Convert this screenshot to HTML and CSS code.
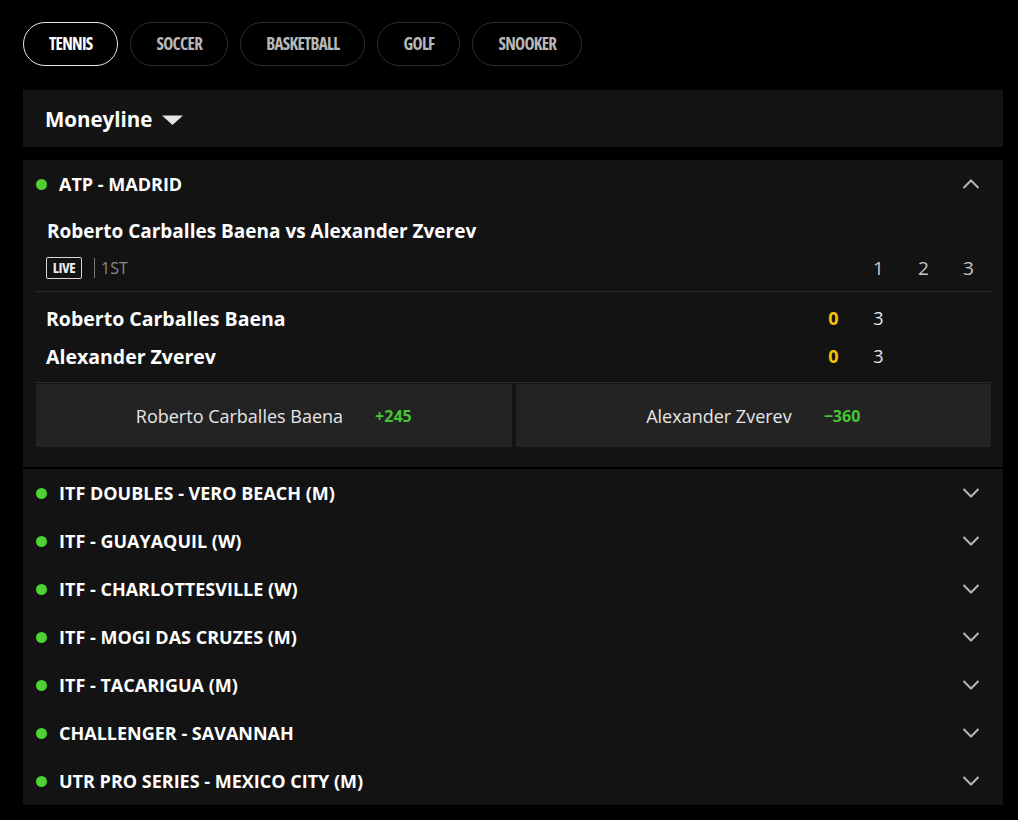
FILE: index.html
```html
<!DOCTYPE html>
<html>
<head>
<meta charset="utf-8">
<link rel="stylesheet" href="styles.css">
</head>
<body>
<div class="page">
  <nav class="tabs">
    <span class="tab active">TENNIS</span>
    <span class="tab">SOCCER</span>
    <span class="tab">BASKETBALL</span>
    <span class="tab">GOLF</span>
    <span class="tab">SNOOKER</span>
  </nav>

  <div class="market">
    <span class="market-title">Moneyline</span>
    <svg class="caret" width="21" height="10" viewBox="0 0 21 10"><path d="M0 0.5 L21 0.5 L10.5 10 Z" fill="#e6e6e6"/></svg>
  </div>

  <div class="card">
    <section class="league open">
      <div class="league-head">
        <span class="dot"></span>
        <span class="league-name">ATP - MADRID</span>
        <svg class="chev" width="18" height="10" viewBox="0 0 18 10"><path d="M1.5 9 L9 1.5 L16.5 9" fill="none" stroke="#b5b5b5" stroke-width="2"/></svg>
      </div>
      <div class="match">
        <div class="match-title">Roberto Carballes Baena vs Alexander Zverev</div>
        <div class="status-row">
          <span class="live">LIVE</span>
          <span class="period">1ST</span>
          <span class="spacer"></span>
          <span class="col"></span>
          <span class="col head">1</span>
          <span class="col head">2</span>
          <span class="col head">3</span>
        </div>
        <div class="players">
          <div class="player-row">
            <span class="player">Roberto Carballes Baena</span>
            <span class="col pts">0</span>
            <span class="col set">3</span>
            <span class="col"></span>
            <span class="col"></span>
          </div>
          <div class="player-row">
            <span class="player">Alexander Zverev</span>
            <span class="col pts">0</span>
            <span class="col set">3</span>
            <span class="col"></span>
            <span class="col"></span>
          </div>
        </div>
        <div class="odds">
          <div class="odd"><span class="odd-name">Roberto Carballes Baena</span><span class="odd-val">+245</span></div>
          <div class="odd"><span class="odd-name">Alexander Zverev</span><span class="odd-val">−360</span></div>
        </div>
      </div>
    </section>

    <ul class="leagues">
      <li class="league-head"><span class="dot"></span><span class="league-name">ITF DOUBLES - VERO BEACH (M)</span><svg class="chev" width="18" height="10" viewBox="0 0 18 10"><path d="M1.5 1 L9 8.5 L16.5 1" fill="none" stroke="#b5b5b5" stroke-width="2"/></svg></li>
      <li class="league-head"><span class="dot"></span><span class="league-name">ITF - GUAYAQUIL (W)</span><svg class="chev" width="18" height="10" viewBox="0 0 18 10"><path d="M1.5 1 L9 8.5 L16.5 1" fill="none" stroke="#b5b5b5" stroke-width="2"/></svg></li>
      <li class="league-head"><span class="dot"></span><span class="league-name">ITF - CHARLOTTESVILLE (W)</span><svg class="chev" width="18" height="10" viewBox="0 0 18 10"><path d="M1.5 1 L9 8.5 L16.5 1" fill="none" stroke="#b5b5b5" stroke-width="2"/></svg></li>
      <li class="league-head"><span class="dot"></span><span class="league-name">ITF - MOGI DAS CRUZES (M)</span><svg class="chev" width="18" height="10" viewBox="0 0 18 10"><path d="M1.5 1 L9 8.5 L16.5 1" fill="none" stroke="#b5b5b5" stroke-width="2"/></svg></li>
      <li class="league-head"><span class="dot"></span><span class="league-name">ITF - TACARIGUA (M)</span><svg class="chev" width="18" height="10" viewBox="0 0 18 10"><path d="M1.5 1 L9 8.5 L16.5 1" fill="none" stroke="#b5b5b5" stroke-width="2"/></svg></li>
      <li class="league-head"><span class="dot"></span><span class="league-name">CHALLENGER - SAVANNAH</span><svg class="chev" width="18" height="10" viewBox="0 0 18 10"><path d="M1.5 1 L9 8.5 L16.5 1" fill="none" stroke="#b5b5b5" stroke-width="2"/></svg></li>
      <li class="league-head"><span class="dot"></span><span class="league-name">UTR PRO SERIES - MEXICO CITY (M)</span><svg class="chev" width="18" height="10" viewBox="0 0 18 10"><path d="M1.5 1 L9 8.5 L16.5 1" fill="none" stroke="#b5b5b5" stroke-width="2"/></svg></li>
    </ul>
  </div>
</div>
</body>
</html>
```

FILE: styles.css
```css
* { box-sizing: border-box; }
html, body { margin: 0; padding: 0; background: #000; }
body {
  font-family: "Open Sans", "Liberation Sans", sans-serif;
  color: #fff;
}
.page {
  width: 980px;
  margin-left: 23px;
  padding-top: 22px;
}

/* Tabs */
.tabs {
  display: flex;
  gap: 12px;
  height: 44px;
}
.tab {
  display: flex;
  align-items: center;
  justify-content: center;
  height: 44px;
  padding: 0 25px 2px;
  border: 1px solid #2e2e2e;
  border-radius: 22px;
  font-family: "Open Sans", sans-serif;
  font-stretch: 75%;
  font-weight: 700;
  font-size: 17px;
  color: #b8b8b8;
  letter-spacing: -0.7px;
}
.tab.active {
  border-color: #e8e8e8;
  color: #fff;
}

/* Market bar */
.market {
  margin-top: 24px;
  height: 57px;
  background: #141414;
  display: flex;
  align-items: center;
  padding-left: 22px;
  gap: 10px;
}
.market-title {
  font-size: 20.5px;
  font-weight: 700;
}
.caret { margin-top: 2px; }

/* Card */
.card {
  margin-top: 13px;
  background: #131313;
}
.league-head {
  display: flex;
  align-items: center;
  height: 48px;
  padding: 0 23px 0 13px;
}
.dot {
  width: 11px;
  height: 11px;
  border-radius: 50%;
  background: #4fd034;
  flex: none;
}
.league-name {
  margin-left: 12px;
  font-size: 18px;
  font-weight: 700;
  flex: 1;
}
.chev { flex: none; }

.league.open {
  border-bottom: 2px solid #000;
}
.match {
  padding: 0 12px 20px 13px;
}
.match-title {
  padding-left: 11px;
  font-size: 19px;
  font-weight: 700;
  line-height: 22px;
  margin-top: 12px;
}
.status-row {
  display: flex;
  align-items: center;
  padding-left: 10px;
  margin-top: 6px;
  border-bottom: 1px solid #2a2a2a;
  padding-bottom: 4px;
  height: 44px;
}
.live {
  display: inline-flex;
  align-items: center;
  justify-content: center;
  width: 36px;
  height: 22px;
  padding-bottom: 1px;
  border: 1.5px solid #d8d8d8;
  border-radius: 2px;
  font-family: "Open Sans", sans-serif;
  font-stretch: 75%;
  font-weight: 700;
  font-size: 15px;
  letter-spacing: -0.4px;
  color: #eee;
}
.period {
  margin-left: 12px;
  padding-left: 6px;
  border-left: 1px solid #777;
  font-size: 16px;
  color: #8a8a8a;
  line-height: 20px;
}
.spacer { flex: 1; }
.col {
  width: 45px;
  text-align: center;
  flex: none;
}
.col.head {
  font-size: 19px;
  color: #c8c8c8;
}
.players {
  padding: 7px 0 7px;
  border-bottom: 1px solid #2a2a2a;
}
.player-row {
  display: flex;
  align-items: center;
  height: 38px;
  padding-left: 10px;
}
.player {
  flex: 1;
  font-size: 19.5px;
  font-weight: 700;
}
.pts {
  color: #f5c400;
  font-weight: 700;
  font-size: 18px;
}
.set {
  color: #e8e8e8;
  font-size: 18px;
}
.odds {
  display: grid;
  grid-template-columns: 1fr 1fr;
  gap: 4px;
  margin-top: 1px;
}
.odd {
  height: 63px;
  background: #232323;
  display: flex;
  align-items: center;
  justify-content: center;
  gap: 32px;
}
.odd-name {
  font-size: 18px;
  color: #e6e6e6;
}
.odd-val {
  font-size: 16px;
  font-weight: 700;
  color: #44c633;
}

.leagues {
  list-style: none;
  margin: 0;
  padding: 0;
}
```
